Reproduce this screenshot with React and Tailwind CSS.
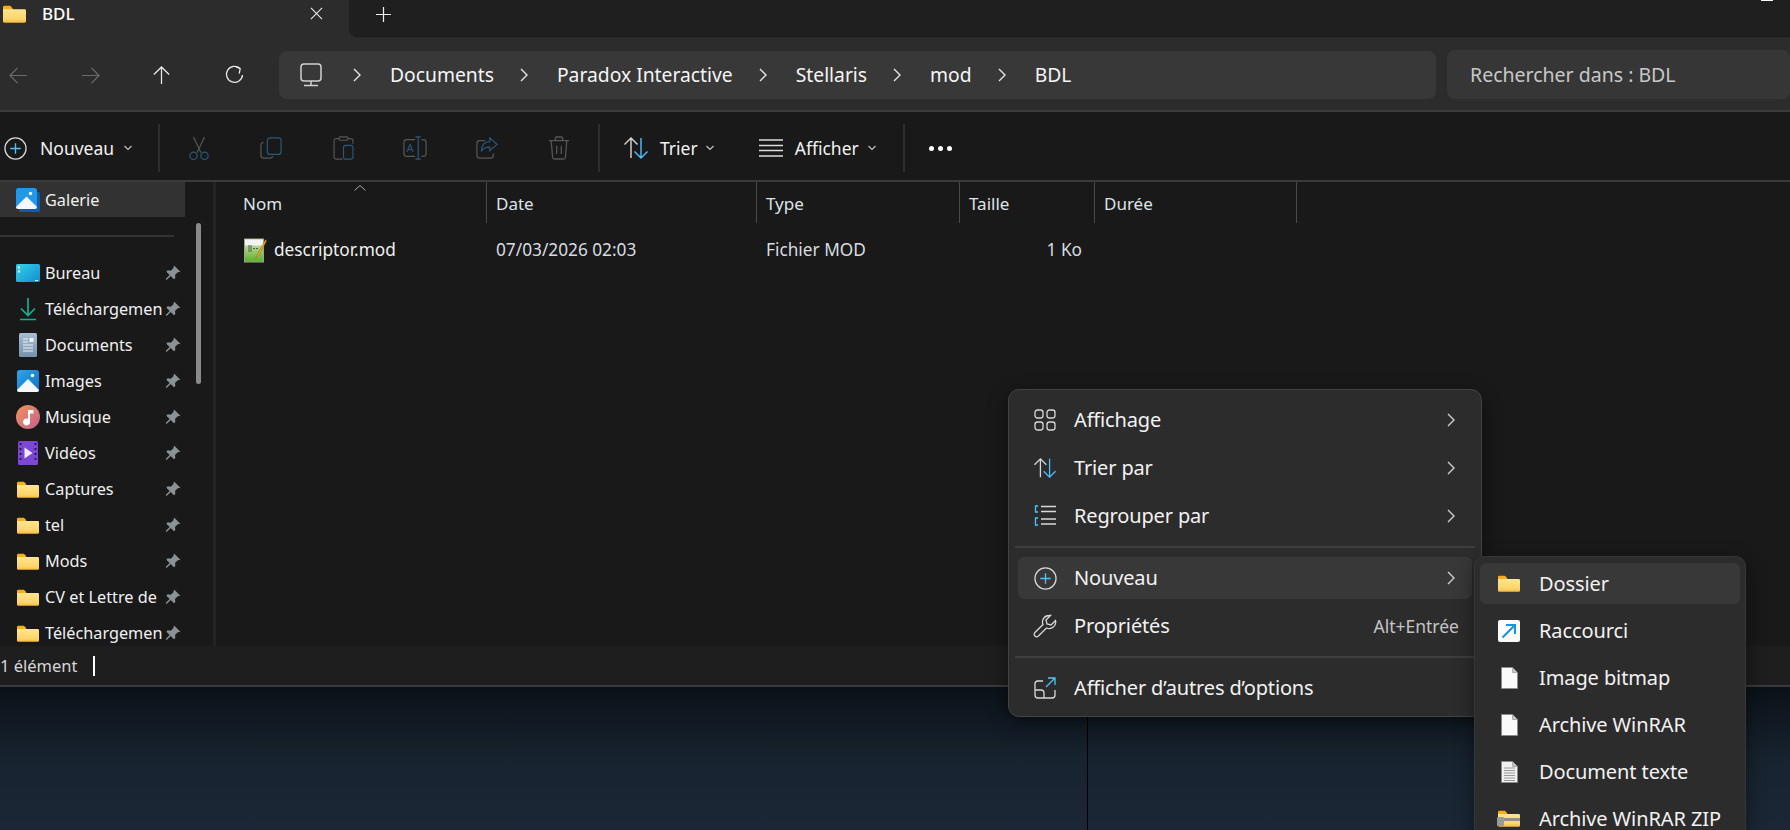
import { Fragment } from 'react'

function Folder({ className = 'w-[22px] h-[17px]' }) {
  return (
    <svg viewBox="0 0 24 18" className={className}>
      <defs>
        <linearGradient id="folderBody" x1="0" y1="0" x2="0" y2="1">
          <stop offset="0" stopColor="#ffe68f" />
          <stop offset="0.75" stopColor="#fdd46a" />
          <stop offset="1" stopColor="#f5b942" />
        </linearGradient>
      </defs>
      <path d="M0 2a1.5 1.5 0 0 1 1.5-1.5h6L10 3v4H0z" fill="#f7ad1c" />
      <path d="M0 4h22.5A1.5 1.5 0 0 1 24 5.5v11a1.5 1.5 0 0 1-1.5 1.5h-21A1.5 1.5 0 0 1 0 16.500z" fill="url(#folderBody)" />
    </svg>
  )
}

function Mountain({ className }) {
  return (
    <svg viewBox="0 0 24 24" className={className}>
      <defs>
        <linearGradient id="skyBlue" x1="0" y1="0" x2="1" y2="1">
          <stop offset="0" stopColor="#2aa5ee" />
          <stop offset="1" stopColor="#0f6fc4" />
        </linearGradient>
      </defs>
      <rect x="1" y="1" width="22" height="22" rx="2.5" fill="url(#skyBlue)" />
      <path d="M1 21l11-11 11 11v0a2 2 0 0 1-2 2H3a2 2 0 0 1-2-2z" fill="#f4f8fc" />
      <circle cx="16.500" cy="6.500" r="1.800" fill="#ffffff" />
    </svg>
  )
}

function Gallery() {
  return (
    <svg viewBox="0 0 24 24" className="w-[24px] h-[24px]">
      <rect x="3" y="4" width="21" height="20" rx="2" fill="#0f5da8" />
      <rect x="0" y="0" width="21" height="21" rx="2.5" fill="#2198e8" />
      <path d="M0 19l10.500-10.500L21 19v0a2 2 0 0 1-2 2H2a2 2 0 0 1-2-2z" fill="#f4f8fc" />
      <circle cx="14.500" cy="5.500" r="1.700" fill="#ffffff" />
    </svg>
  )
}

function Desk() {
  return (
    <svg viewBox="0 0 24 18" className="w-[24px] h-[18px]">
      <defs>
        <linearGradient id="deskFill" x1="0" y1="0" x2="1" y2="1">
          <stop offset="0" stopColor="#36d0e8" />
          <stop offset="1" stopColor="#0f8ed0" />
        </linearGradient>
      </defs>
      <rect width="24" height="18" rx="1.500" fill="url(#deskFill)" />
      <rect x="2" y="2.500" width="2" height="2" fill="#e8fbff" />
      <rect x="2" y="6.500" width="2" height="2" fill="#e8fbff" />
      <rect x="19" y="16" width="3" height="1" fill="#e8fbff" />
    </svg>
  )
}

function DownloadArrow() {
  return (
    <svg viewBox="0 0 24 24" className="w-[24px] h-[24px]" fill="none" stroke="#15b08e" strokeWidth="1.700">
      <path d="M12 1v17M5 11.500l7 7 7-7M4 22.500h16" />
    </svg>
  )
}

function DocIcon() {
  return (
    <svg viewBox="0 0 18 24" className="w-[18px] h-[24px]">
      <defs>
        <linearGradient id="docFill" x1="0" y1="0" x2="0" y2="1">
          <stop offset="0" stopColor="#a9bdd4" />
          <stop offset="1" stopColor="#7891ad" />
        </linearGradient>
      </defs>
      <rect width="18" height="24" rx="1.500" fill="url(#docFill)" />
      <path d="M4 6h5M4 9h5M4 12h10M4 15h10M4 18h10" stroke="#eef3f8" strokeWidth="1" />
      <rect x="10.500" y="5" width="4" height="4" fill="#eef3f8" />
    </svg>
  )
}

function MusicIcon() {
  return (
    <svg viewBox="0 0 24 24" className="w-[24px] h-[24px]">
      <defs>
        <linearGradient id="musicFill" x1="0" y1="0" x2="1" y2="1">
          <stop offset="0" stopColor="#f2935a" />
          <stop offset="1" stopColor="#c4608f" />
        </linearGradient>
      </defs>
      <circle cx="12" cy="12" r="12" fill="url(#musicFill)" />
      <path d="M12 5h5.500v3.500H14v8.500a3.500 3.500 0 1 1-2-3.200z" fill="#ffffff" />
    </svg>
  )
}

function VideoIcon() {
  return (
    <svg viewBox="0 0 20 24" className="w-[20px] h-[24px]">
      <rect width="20" height="24" rx="1.500" fill="#7c46d6" />
      <path d="M1.500 3h2M1.500 8h2M1.500 13h2M1.500 18h2M16.500 3h2M16.500 8h2M16.500 13h2M16.500 18h2" stroke="#2b1a52" strokeWidth="2" />
      <path d="M6.500 6.500v11l8-5.500z" fill="#f2ecff" />
    </svg>
  )
}

function Pin() {
  return (
    <svg viewBox="0 0 24 24" className="w-[16px] h-[16px]" fill="#8a9298">
      <path d="M14 1l9 9-2.500 1-1-.5-4.500 4.500.5 4.500-2 2-5-5-6 6-1.500-1.500 6-6-5-5 2-2 4.500.5L13 4.500l-.500-1z" />
    </svg>
  )
}

function ArrowIcon({ d, color = '#e8e8e8' }) {
  return (
    <svg viewBox="0 0 20 20" className="w-[19px] h-[19px]" fill="none" stroke={color} strokeWidth="1.300">
      <path d={d} />
    </svg>
  )
}

function Refresh() {
  return (
    <svg viewBox="0 0 20 20" className="w-[20px] h-[20px] -ml-[1px]" fill="none" stroke="#e8e8e8" strokeWidth="1.300">
      <path d="M16 3.500A8 8 0 1 0 18.500 10" />
      <path d="M11.500 1.500l4.700 2.200-1 5" />
    </svg>
  )
}

function Monitor() {
  return (
    <svg viewBox="0 0 22 24" className="w-[22px] h-[24px]" fill="none" stroke="#cfcfcf" strokeWidth="1.500">
      <rect x="1" y="1" width="20" height="17" rx="3" />
      <path d="M11 18v4M4 22.500h14" />
    </svg>
  )
}

function Chevron({ className = 'w-[8px] h-[14px]', color = '#e6e6e6' }) {
  return (
    <svg viewBox="0 0 8 14" className={className} fill="none" stroke={color} strokeWidth="1.400">
      <path d="M1 1l6 6-6 6" />
    </svg>
  )
}

function Down({ color = '#c8c8c8' }) {
  return (
    <svg viewBox="0 0 8 6" className="w-[8px] h-[6px]" fill="none" stroke={color} strokeWidth="1.100">
      <path d="M.5 1l3.500 3.500L7.500 1" />
    </svg>
  )
}

function PlusCircle() {
  return (
    <svg viewBox="0 0 24 24" className="w-[23px] h-[23px]" fill="none">
      <circle cx="12" cy="12" r="11" stroke="#d8d8d8" strokeWidth="1.300" />
      <path d="M12 6.500v11M6.500 12h11" stroke="#4cc2ff" strokeWidth="1.400" />
    </svg>
  )
}

const dimBlue = '#27597a'
const dimGray = '#565656'

function CutIcon() {
  return (
    <svg viewBox="0 0 24 26" className="w-[22px] h-[24px]" fill="none" strokeWidth="1.300">
      <path d="M6 1l8 17M18 1l-8 17" stroke={dimGray} />
      <circle cx="6" cy="21.500" r="4" stroke={dimBlue} />
      <circle cx="18" cy="21.500" r="4" stroke={dimBlue} />
    </svg>
  )
}

function CopyIcon() {
  return (
    <svg viewBox="0 0 24 24" className="w-[22px] h-[22px]" fill="none" strokeWidth="1.300">
      <path d="M4 6a3 3 0 0 0-3 3v11a3 3 0 0 0 3 3h7a3 3 0 0 0 3-2" stroke={dimGray} />
      <rect x="8" y="1" width="15" height="18" rx="3" stroke={dimBlue} />
    </svg>
  )
}

function PasteIcon() {
  return (
    <svg viewBox="0 0 24 28" className="w-[21px] h-[24px]" fill="none" strokeWidth="1.300">
      <path d="M7 3H3.500A2.500 2.500 0 0 0 1 5.500v19A2.500 2.500 0 0 0 3.500 27H11M17 3h3.500A2.500 2.500 0 0 1 23 5.500V9" stroke={dimGray} />
      <rect x="7" y="1" width="10" height="4" rx="1" stroke={dimGray} />
      <rect x="12" y="11" width="11" height="16" rx="2.500" stroke={dimBlue} />
    </svg>
  )
}

function RenameIcon() {
  return (
    <svg viewBox="0 0 26 26" className="w-[24px] h-[24px]" fill="none" strokeWidth="1.300">
      <path d="M13 4H4a3 3 0 0 0-3 3v12a3 3 0 0 0 3 3h9M20 4h2a3 3 0 0 1 3 3v12a3 3 0 0 1-3 3h-2" stroke={dimGray} />
      <path d="M16.500 1v24M13.500 1h6M13.500 25h6" stroke={dimBlue} />
      <text x="7.500" y="17.500" textAnchor="middle" fontSize="12" fill={dimBlue} stroke="none">A</text>
    </svg>
  )
}

function ShareIcon() {
  return (
    <svg viewBox="0 0 24 24" className="w-[22px] h-[22px]" fill="none" strokeWidth="1.300">
      <path d="M10 4H4a3 3 0 0 0-3 3v13a3 3 0 0 0 3 3h12a3 3 0 0 0 3-3v-2" stroke={dimGray} />
      <path d="M15 1l8 7-8 7v-4c-4 0-7 1-9 4 0-6 3-10 9-10z" stroke={dimBlue} />
    </svg>
  )
}

function TrashIcon() {
  return (
    <svg viewBox="0 0 24 26" className="w-[22px] h-[24px]" fill="none" stroke={dimGray} strokeWidth="1.400">
      <path d="M1 5h22M8 5V2.500A1.500 1.500 0 0 1 9.500 1h5A1.500 1.500 0 0 1 16 2.500V5M3.500 5l1.500 18a2 2 0 0 0 2 2h10a2 2 0 0 0 2-2l1.500-18M9.500 10.500v9M14.500 10.500v9" />
    </svg>
  )
}

function SortIcon({ className = 'w-[26px] h-[24px]' }) {
  return (
    <svg viewBox="0 0 26 24" className={className} fill="none" strokeWidth="1.400">
      <path d="M8 22V2M1.500 8.500L8 2l6.500 6.500" stroke="#d8d8d8" />
      <path d="M18 2v20M11.500 15.500L18 22l6.500-6.500" stroke="#4cc2ff" />
    </svg>
  )
}

function ListIcon() {
  return (
    <svg viewBox="0 0 24 20" className="w-[24px] h-[20px]" fill="none" stroke="#dcdcdc" strokeWidth="1.500">
      <path d="M0 2h24M0 7.500h24M0 12.500h24M0 18h24" />
    </svg>
  )
}

function GridIcon() {
  return (
    <svg viewBox="0 0 22 22" className="w-[22px] h-[22px]" fill="none" stroke="#d8d8d8" strokeWidth="1.300">
      <rect x="1" y="1" width="8" height="8" rx="2.500" />
      <rect x="13" y="1" width="8" height="8" rx="2.500" />
      <rect x="1" y="13" width="8" height="8" rx="2.500" />
      <rect x="13" y="13" width="8" height="8" rx="2.500" />
    </svg>
  )
}

function GroupIcon() {
  return (
    <svg viewBox="0 0 22 22" className="w-[22px] h-[22px]" fill="none" strokeWidth="1.300">
      <path d="M4 1H1.500v6H4M4 13H1.500v7H4" stroke="#4cc2ff" />
      <path d="M7 1.500h15M7 6.500h15M7 14h15M7 19h15" stroke="#d8d8d8" />
    </svg>
  )
}

function WrenchIcon() {
  return (
    <svg viewBox="0 0 24 24" className="w-[24px] h-[24px]" fill="none" stroke="#d8d8d8" strokeWidth="1.300">
      <path d="M16 1.500a6.500 6.500 0 0 0-6 9L1.700 18.800a2.500 2.500 0 0 0 3.500 3.500l8.300-8.300a6.500 6.500 0 0 0 9-7.500L18 11l-4-1-1-4 4.500-4.500c-.5 0-1-.05-1.500 0z" />
    </svg>
  )
}

function MoreIcon() {
  return (
    <svg viewBox="0 0 22 22" className="w-[22px] h-[22px]" fill="none" strokeWidth="1.300">
      <path d="M9 4H4a3 3 0 0 0-3 3v11a3 3 0 0 0 3 3h14a3 3 0 0 0 3-3v-5M1 13h6a3 3 0 0 1 3 3v5" stroke="#d8d8d8" />
      <path d="M12 10l9-9M14 1h7v7" stroke="#4cc2ff" />
    </svg>
  )
}

function BlankFile({ lines }) {
  return (
    <svg viewBox="0 0 17 22" className="w-[17px] h-[22px]">
      <path d="M.5.500h11l5 5v16H.5z" fill={lines ? '#f0f0f0' : '#fafafa'} stroke="#8a8a8a" />
      <path d="M11.500.500v5h5z" fill="#c9c9c9" stroke="#8a8a8a" strokeWidth=".6" />
      {lines && <path d="M3 7h11M3 9.500h11M3 12h11M3 14.500h11M3 17h11M3 19.500h11" stroke="#9a9a9a" strokeWidth="1" />}
    </svg>
  )
}

function ShortcutIcon() {
  return (
    <svg viewBox="0 0 22 22" className="w-[22px] h-[22px]" fill="none">
      <rect width="22" height="22" rx="2" fill="#fbfbfb" />
      <path d="M4.500 17.500L16 6M8 5h9v9" stroke="#1593e0" strokeWidth="2" />
    </svg>
  )
}

function ZipFolder() {
  return (
    <div className="relative">
      <Folder className="w-[22px] h-[17px]" />
      <div className="absolute left-[-1px] top-[7px] w-[7px] h-[9px] bg-[#9a9a9a] rounded-[1px]" />
      <div className="absolute left-[6px] top-[8px] w-[16px] h-[3px] bg-[#8f8f8f]" />
    </div>
  )
}

function ModFile() {
  return (
    <svg viewBox="0 0 23 25" className="w-[23px] h-[25px]">
      <defs>
        <linearGradient id="modFill" x1="0" y1="0" x2="0" y2="1">
          <stop offset="0" stopColor="#d6ecb8" />
          <stop offset="1" stopColor="#5ab02a" />
        </linearGradient>
      </defs>
      <rect x=".5" y="1" width="19" height="23" fill="url(#modFill)" stroke="#9aa58a" />
      <rect x="1" y="1.500" width="18" height="6" fill="#f3f3f3" />
      <path d="M5 7v7M7 7v7M9 10.500h2M12 10.500h2" stroke="#5a5a5a" strokeWidth="1" />
      <path d="M21.500 1.500L13 17l-1.500 3.500 3-2.500L22.500 3z" fill="#f0b429" stroke="#8a5a12" strokeWidth=".5" />
    </svg>
  )
}

const pinned = [
  { label: 'Bureau', icon: <Desk /> },
  { label: 'Téléchargemen', icon: <DownloadArrow /> },
  { label: 'Documents', icon: <DocIcon /> },
  { label: 'Images', icon: <Mountain className="w-[24px] h-[24px]" /> },
  { label: 'Musique', icon: <MusicIcon /> },
  { label: 'Vidéos', icon: <VideoIcon /> },
  { label: 'Captures', icon: <Folder /> },
  { label: 'tel', icon: <Folder /> },
  { label: 'Mods', icon: <Folder /> },
  { label: 'CV et Lettre de', icon: <Folder /> },
  { label: 'Téléchargemen', icon: <Folder /> },
]

const crumbs = ['Documents', 'Paradox Interactive', 'Stellaris', 'mod', 'BDL']

const columns = [
  { label: 'Nom', width: 'w-[271px] pl-[27px]' },
  { label: 'Date', width: 'w-[270px] pl-[9px]' },
  { label: 'Type', width: 'w-[203px] pl-[9px]' },
  { label: 'Taille', width: 'w-[135px] pl-[9px]' },
  { label: 'Durée', width: 'w-[202px] pl-[9px]' },
]

const menuGroups = [
  [
    { label: 'Affichage', icon: <GridIcon />, arrow: true },
    { label: 'Trier par', icon: <SortIcon className="w-[24px] h-[22px]" />, arrow: true },
    { label: 'Regrouper par', icon: <GroupIcon />, arrow: true },
  ],
  [
    { label: 'Nouveau', icon: <PlusCircle />, arrow: true, active: true },
    { label: 'Propriétés', icon: <WrenchIcon />, hint: 'Alt+Entrée' },
  ],
  [{ label: 'Afficher d’autres d’options', icon: <MoreIcon /> }],
]

const newItems = [
  { label: 'Dossier', icon: <Folder />, active: true },
  { label: 'Raccourci', icon: <ShortcutIcon /> },
  { label: 'Image bitmap', icon: <BlankFile /> },
  { label: 'Archive WinRAR', icon: <BlankFile /> },
  { label: 'Document texte', icon: <BlankFile lines /> },
  { label: 'Archive WinRAR ZIP', icon: <ZipFolder /> },
]

function ContextMenu() {
  return (
    <div className="absolute left-[1008px] top-[389px] w-[474px] h-[328px] px-[9px] pt-[6px] bg-[#2c2c2c] border border-[#434343] rounded-[11px] shadow-[0_6px_20px_rgba(0,0,0,0.45)] text-[20px] text-[#f2f2f2]">
      {menuGroups.map((group, i) => (
        <Fragment key={i}>
          {i > 0 && <div className="my-[6px] h-[2px] -mx-[3px] bg-[#3e3e3e]" />}
          {group.map((item) => (
            <div key={item.label} className="h-[48px] flex items-center">
              <div className={`w-full h-[42px] flex items-center pl-[15px] rounded-md ${item.active ? 'bg-[#383838]' : ''}`}>
                <div className="w-[24px] flex justify-center">{item.icon}</div>
                <span className="ml-[17px] tracking-[-0.15px]">{item.label}</span>
                {item.arrow && (
                  <div className="ml-auto mr-[17px] flex">
                    <Chevron color="#cfcfcf" />
                  </div>
                )}
                {item.hint && <span className="ml-auto mr-[13px] text-[17.5px] text-[#c4c4c4]">{item.hint}</span>}
              </div>
            </div>
          ))}
        </Fragment>
      ))}
    </div>
  )
}

function NewMenu() {
  return (
    <div className="absolute left-[1474px] top-[556px] w-[272px] h-[300px] px-[5px] pt-[3px] bg-[#2c2c2c] border border-[#363636] rounded-[10px] shadow-[0_6px_20px_rgba(0,0,0,0.45)] text-[20px] text-[#f2f2f2]">
      {newItems.map((item) => (
        <div key={item.label} className="h-[47px] flex items-center">
          <div className={`w-full h-[41px] flex items-center pl-[18px] rounded-md ${item.active ? 'bg-[#383838]' : ''}`}>
            <div className="w-[22px] flex justify-center">{item.icon}</div>
            <span className="ml-[19px] tracking-[-0.1px]">{item.label}</span>
          </div>
        </div>
      ))}
    </div>
  )
}

export default function App() {
  return (
    <div className="relative w-[1790px] h-[830px] overflow-hidden flex flex-col bg-[#191919] text-white font-['Noto_Sans',sans-serif]">
      {/* onglets */}
      <div className="h-[37px] flex bg-[#2c2c2c]">
        <div className="w-[349px] flex items-center pb-[10px]">
          <div className="ml-[3px] flex">
            <Folder className="w-[23px] h-[18px]" />
          </div>
          <span className="ml-[16px] text-[17px] font-medium">BDL</span>
          <svg viewBox="0 0 14 14" className="ml-auto mr-[26px] w-[13px] h-[13px]" fill="none" stroke="#f0f0f0" strokeWidth="1.100">
            <path d="M1 1l12 12M13 1L1 13" />
          </svg>
        </div>
        <div className="flex-1 flex bg-[#1f1f1f] rounded-bl-lg border-b border-[#1a1a1a]">
          <svg viewBox="0 0 16 16" className="ml-[27px] mt-[7px] w-[15px] h-[15px]" fill="none" stroke="#f0f0f0" strokeWidth="1.300">
            <path d="M8 0v16M0 8h16" />
          </svg>
          <div className="ml-auto mr-[17px] w-[12px] h-[1px] bg-white" />
        </div>
      </div>

      {/* barre d'adresse */}
      <div className="h-[75px] flex pt-[14px] bg-[#2c2c2c] border-b-2 border-[#3a3a3a]">
        <div className="h-[48px] pl-[9px] flex items-center gap-[53px]">
          <ArrowIcon color="#6b6b6b" d="M19 10H1.500M9 2l-8 8 8 8" />
          <ArrowIcon color="#6b6b6b" d="M1 10h17.500M11 2l8 8-8 8" />
          <div className="flex -ml-[1px] mr-[1px]">
            <ArrowIcon d="M10 19V1.500M2 9l8-8 8 8" />
          </div>
          <Refresh />
        </div>
        <div className="ml-[35px] w-[1157px] h-[48px] flex items-center pl-[21px] bg-[#383838] rounded-lg text-[19.3px] text-[#f5f5f5]">
          <div className="mr-[5px] flex">
            <Monitor />
          </div>
          {crumbs.map((c) => (
            <Fragment key={c}>
              <div className="ml-[26px] mr-[29px] flex">
                <Chevron />
              </div>
              <span className="pt-[1px]">{c}</span>
            </Fragment>
          ))}
        </div>
        <div className="ml-[11px] flex-1 h-[49px] -mt-[1px] flex items-center pl-[23px] pt-[1px] bg-[#363636] rounded-lg text-[19.5px] text-[#c8c8c8]">
          Rechercher dans : BDL
        </div>
      </div>

      {/* barre d'outils */}
      <div className="h-[70px] flex items-center pt-[4px] bg-[#191919] border-b-2 border-[#3a3a3a] text-[17.5px] text-[#f2f2f2]">
        <div className="w-[158px] flex items-center pl-[4px]">
          <PlusCircle />
          <span className="ml-[13px]">Nouveau</span>
          <div className="ml-[10px] flex">
            <Down />
          </div>
        </div>
        <div className="w-[2px] h-[48px] bg-[#2e2e2e]" />
        <div className="ml-[3px] flex items-center">
          {[<CutIcon />, <CopyIcon />, <PasteIcon />, <RenameIcon />, <ShareIcon />, <TrashIcon />].map((icon, i) => (
            <div key={i} className="w-[72px] flex justify-center">
              {icon}
            </div>
          ))}
        </div>
        <div className="ml-[3px] w-[2px] h-[48px] bg-[#2e2e2e]" />
        <div className="ml-[23px] flex items-center">
          <SortIcon />
          <span className="ml-[11px]">Trier</span>
          <div className="ml-[8px] flex">
            <Down />
          </div>
          <div className="ml-[45px] flex">
            <ListIcon />
          </div>
          <span className="ml-[12px]">Afficher</span>
          <div className="ml-[9px] flex">
            <Down />
          </div>
        </div>
        <div className="ml-[27px] w-[2px] h-[48px] bg-[#2e2e2e]" />
        <div className="ml-[24px] flex gap-[4px]">
          <div className="w-[5px] h-[5px] rounded-full bg-white" />
          <div className="w-[5px] h-[5px] rounded-full bg-white" />
          <div className="w-[5px] h-[5px] rounded-full bg-white" />
        </div>
      </div>

      {/* contenu */}
      <div className="h-[464px] flex overflow-hidden text-[16.25px] text-[#f0f0f0]">
        <div className="w-[185px] shrink-0">
          <div className="h-[35px] flex items-center pl-[16px] bg-[#323232]">
            <Gallery />
            <span className="ml-[5px] pt-[2px]">Galerie</span>
          </div>
          <div className="mt-[18px] mb-[18px] w-[174px] h-[2px] bg-[#333333]" />
          {pinned.map((row, i) => (
            <div key={i} className="h-[36px] flex items-center pl-[16px]">
              <div className="w-[24px] flex justify-center shrink-0">{row.icon}</div>
              <span className="ml-[5px] w-[117px] whitespace-nowrap">{row.label}</span>
              <div className="ml-[3px] flex">
                <Pin />
              </div>
            </div>
          ))}
        </div>
        <div className="ml-[11px] mt-[41px] w-[5px] h-[161px] rounded-full bg-[#8a8a8a]" />
        <div className="ml-[12px] w-[3px] bg-[#232323]" />
        <div className="flex-1">
          <div className="relative h-[41px] flex text-[17px]">
            <svg viewBox="0 0 12 6" className="absolute left-[138px] top-[3px] w-[12px] h-[6px]" fill="none" stroke="#a8a8a8">
              <path d="M.5 5.500L6 .5l5.500 5" />
            </svg>
            {columns.map((c) => (
              <div key={c.label} className={`${c.width} flex items-center pt-[2px] border-r border-[#4a4a4a] text-[#dfe3e8]`}>
                {c.label}
              </div>
            ))}
          </div>
          <div className="mt-[6px] h-[42px] flex items-center text-[17.25px]">
            <div className="w-[271px] pl-[28px] flex items-center gap-[7px]">
              <ModFile />
              <span>descriptor.mod</span>
            </div>
            <div className="w-[270px] pl-[9px] text-[#d8dce0]">07/03/2026 02:03</div>
            <div className="w-[203px] pl-[9px] text-[#d8dce0]">Fichier MOD</div>
            <div className="w-[135px] pr-[13px] text-right text-[#d8dce0]">1 Ko</div>
          </div>
        </div>
      </div>

      {/* barre d'état */}
      <div className="h-[41px] flex items-center bg-[#1e1e1e] border-b-2 border-[#3a3a3a] text-[16.5px] text-[#d6d6d6]">
        <span className="pt-[2px]">1 élément</span>
        <div className="ml-[16px] w-[2px] h-[20px] bg-white" />
      </div>

      {/* bureau */}
      <div className="flex-1 flex bg-gradient-to-b from-[#0b1118] via-[#17232f] to-[#1b2736]">
        <div className="w-[1088px] border-r border-black" />
      </div>

      <ContextMenu />
      <NewMenu />
    </div>
  )
}
